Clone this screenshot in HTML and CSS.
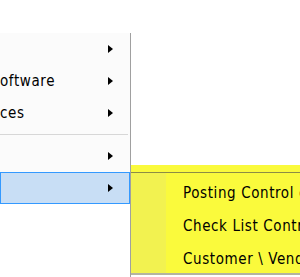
FILE: index.html
```html
<!DOCTYPE html>
<html lang="en">
<head>
  <meta charset="UTF-8" />
  <title>Menu</title>
  <link rel="stylesheet" href="styles.css">
</head>
<body>

  <div class="screen">

    <!-- parent menu, cut off at the left edge -->
    <div class="menu-col">
      <ul class="menu">
        <li class="item"><span class="label"></span><span class="arrow"></span></li>
        <li class="item"><span class="label">oftware</span><span class="arrow"></span></li>
        <li class="item"><span class="label">ces</span><span class="arrow"></span></li>
        <li class="sep"></li>
        <li class="item"><span class="label"></span><span class="arrow"></span></li>
        <li class="item active"><span class="label"></span><span class="arrow"></span></li>
      </ul>
    </div>

    <!-- submenu, marked with a yellow highlighter -->
    <div class="sub-col">
      <ul class="submenu">
        <li class="sub-item">Posting Control of Documents</li>
        <li class="sub-item">Check List Control</li>
        <li class="sub-item">Customer \ Vendor</li>
      </ul>
    </div>

  </div>

</body>
</html>
```

FILE: styles.css
```css
body {
  margin: 0;
  background: #fff;
  font-family: "DejaVu Sans Condensed", "DejaVu Sans", sans-serif;
  font-size: 15px;
  letter-spacing: 0.6px;
  color: #000;
}

.screen {
  display: flex;
  height: 277px;
  overflow: hidden;
}

/* Parent menu */
.menu-col {
  flex: none;
  width: 130px;
  margin-top: 33px;
  border-right: 1px solid #a0a0a0;
}

.menu {
  list-style: none;
  margin: 0;
  padding: 0;
  background: #fbfbfb;
}

.item {
  display: flex;
  align-items: center;
  justify-content: space-between;
  height: 32px;
  padding-right: 17px;
  white-space: nowrap;
}

.item.active {
  height: 30px;
  background: #c8def5;
  border: 1px solid #3399ff;
  padding-right: 16px;
}

.arrow {
  width: 0;
  height: 0;
  border-left: 5px solid #000;
  border-top: 4px solid transparent;
  border-bottom: 4px solid transparent;
}

.sep {
  height: 11px;
  display: flex;
  align-items: center;
}

.sep::after {
  content: "";
  flex: 1;
  margin-right: 2px;
  border-top: 1px solid #d7d7d7;
}

/* Submenu */
.sub-col {
  flex: 1;
  min-width: 0;
  overflow: hidden;
  box-sizing: border-box;
  margin-top: 165px;
  height: 110px;
  padding-top: 7px;
  background: #fafa3c;
  border-bottom: 2px solid #b4b4a0;
}

.submenu {
  list-style: none;
  margin: 0;
  padding: 4px 0 0;
  border-top: 1px solid #8c8c46;
  height: 96px;
  background: linear-gradient(to right, #f2f250 0, #f2f250 35px, #fafa3c 35px);
}

.sub-item {
  height: 33px;
  line-height: 33px;
  padding-left: 52px;
  white-space: nowrap;
}
```
